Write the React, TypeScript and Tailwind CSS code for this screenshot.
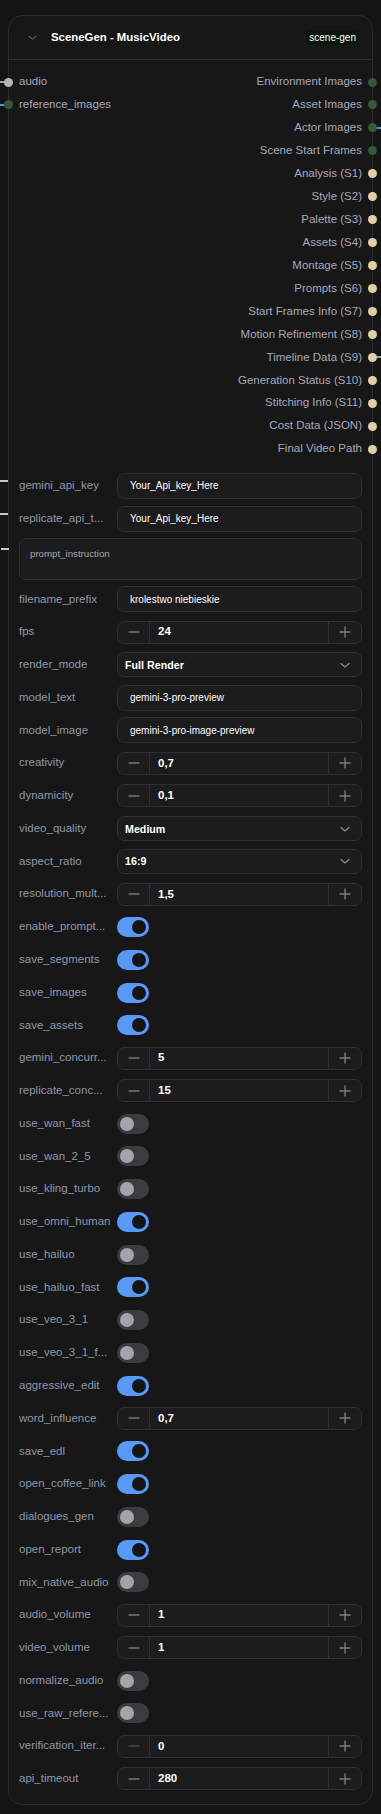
import React from "react";

type Out = { label: string; c: "g" | "b"; link?: string };

const outputs: Out[] = [
  { label: "Environment Images", c: "g" },
  { label: "Asset Images", c: "g" },
  { label: "Actor Images", c: "g", link: "#3f9fe6" },
  { label: "Scene Start Frames", c: "g" },
  { label: "Analysis (S1)", c: "b" },
  { label: "Style (S2)", c: "b" },
  { label: "Palette (S3)", c: "b" },
  { label: "Assets (S4)", c: "b" },
  { label: "Montage (S5)", c: "b" },
  { label: "Prompts (S6)", c: "b" },
  { label: "Start Frames Info (S7)", c: "b" },
  { label: "Motion Refinement (S8)", c: "b" },
  { label: "Timeline Data (S9)", c: "b", link: "#8da88d" },
  { label: "Generation Status (S10)", c: "b" },
  { label: "Stitching Info (S11)", c: "b" },
  { label: "Cost Data (JSON)", c: "b" },
  { label: "Final Video Path", c: "b" },
];

type W =
  | { t: "text"; label: string; value: string; link?: boolean }
  | { t: "area"; label: string; link?: boolean }
  | { t: "num"; label: string; value: string; dim?: boolean }
  | { t: "sel"; label: string; value: string }
  | { t: "tog"; label: string; on: boolean };

const widgets: W[] = [
  { t: "text", label: "gemini_api_key", value: "Your_Api_key_Here", link: true },
  { t: "text", label: "replicate_api_t...", value: "Your_Api_key_Here", link: true },
  { t: "area", label: "prompt_instruction", link: true },
  { t: "text", label: "filename_prefix", value: "krolestwo niebieskie" },
  { t: "num", label: "fps", value: "24" },
  { t: "sel", label: "render_mode", value: "Full Render" },
  { t: "text", label: "model_text", value: "gemini-3-pro-preview" },
  { t: "text", label: "model_image", value: "gemini-3-pro-image-preview" },
  { t: "num", label: "creativity", value: "0,7" },
  { t: "num", label: "dynamicity", value: "0,1" },
  { t: "sel", label: "video_quality", value: "Medium" },
  { t: "sel", label: "aspect_ratio", value: "16:9" },
  { t: "num", label: "resolution_mult...", value: "1,5" },
  { t: "tog", label: "enable_prompt...", on: true },
  { t: "tog", label: "save_segments", on: true },
  { t: "tog", label: "save_images", on: true },
  { t: "tog", label: "save_assets", on: true },
  { t: "num", label: "gemini_concurr...", value: "5" },
  { t: "num", label: "replicate_conc...", value: "15" },
  { t: "tog", label: "use_wan_fast", on: false },
  { t: "tog", label: "use_wan_2_5", on: false },
  { t: "tog", label: "use_kling_turbo", on: false },
  { t: "tog", label: "use_omni_human", on: true },
  { t: "tog", label: "use_hailuo", on: false },
  { t: "tog", label: "use_hailuo_fast", on: true },
  { t: "tog", label: "use_veo_3_1", on: false },
  { t: "tog", label: "use_veo_3_1_f...", on: false },
  { t: "tog", label: "aggressive_edit", on: true },
  { t: "num", label: "word_influence", value: "0,7" },
  { t: "tog", label: "save_edl", on: true },
  { t: "tog", label: "open_coffee_link", on: true },
  { t: "tog", label: "dialogues_gen", on: false },
  { t: "tog", label: "open_report", on: true },
  { t: "tog", label: "mix_native_audio", on: false },
  { t: "num", label: "audio_volume", value: "1" },
  { t: "num", label: "video_volume", value: "1" },
  { t: "tog", label: "normalize_audio", on: false },
  { t: "tog", label: "use_raw_refere...", on: false },
  { t: "num", label: "verification_iter...", value: "0", dim: true },
  { t: "num", label: "api_timeout", value: "280" },
];

function Chevron({ className }: { className?: string }) {
  return (
    <svg viewBox="0 0 12 12" className={className} fill="none">
      <path d="M2 4.5 L6 8 L10 4.5" stroke="currentColor" strokeWidth="1.2" strokeLinecap="round" strokeLinejoin="round" />
    </svg>
  );
}

function Minus({ dim }: { dim?: boolean }) {
  return (
    <svg viewBox="0 0 12 12" className={`h-[12px] w-[12px] ${dim ? "text-[#4a4a4e]" : "text-[#7c7c82]"}`} fill="none">
      <path d="M0.5 6 H11.5" stroke="currentColor" strokeWidth="1.4" />
    </svg>
  );
}

function Plus() {
  return (
    <svg viewBox="0 0 12 12" className="h-[12px] w-[12px] text-[#7c7c82]" fill="none">
      <path d="M0.5 6 H11.5 M6 0.5 V11.5" stroke="currentColor" strokeWidth="1.4" />
    </svg>
  );
}

function Label({ children }: { children: React.ReactNode }) {
  return (
    <div className="w-[91px] shrink-0 overflow-hidden whitespace-nowrap text-[11.5px] leading-none text-[#8e96aa]">
      {children}
    </div>
  );
}

function Widget({ w }: { w: W }) {
  if (w.t === "area") {
    return (
      <div className="relative h-[42px] rounded-[7px] border border-[#2f2f33] bg-[#1c1c1e] pl-[10px] pt-[9px] text-[9.7px] leading-[11px] text-[#a6a6a6]">
        {w.link && <div className="absolute left-[-19px] top-[9px] h-[2px] w-[8px] bg-[#c3cbbb]" />}
        prompt_instruction
      </div>
    );
  }
  let control: React.ReactNode = null;
  if (w.t === "text") {
    control = (
      <div className="flex h-[26px] flex-1 items-center rounded-[7px] border border-[#2f2f33] bg-[#1c1c1e] pl-[12px] text-[10px] text-white">
        {w.value}
      </div>
    );
  } else if (w.t === "num") {
    control = (
      <div className="flex h-[23px] flex-1 items-stretch rounded-[7px] border border-[#2f2f33] bg-[#1c1c1e]">
        <div className="flex w-[32px] items-center justify-center border-r border-[#2f2f33]">
          <Minus dim={w.dim} />
        </div>
        <div className="flex flex-1 items-center pl-[8px] text-[11.5px] font-bold text-white">{w.value}</div>
        <div className="flex w-[33px] items-center justify-center border-l border-[#2f2f33]">
          <Plus />
        </div>
      </div>
    );
  } else if (w.t === "sel") {
    control = (
      <div className="flex h-[25px] flex-1 items-center justify-between rounded-[7px] border border-[#2f2f33] bg-[#1c1c1e] pl-[7px] pr-[10px] text-[10.7px] font-bold text-white">
        <span>{w.value}</span>
        <Chevron className="h-[12px] w-[12px] text-[#8a8a90]" />
      </div>
    );
  } else if (w.t === "tog") {
    control = w.on ? (
      <div className="flex h-[20px] w-[32px] items-center justify-end rounded-full bg-[#5899f6] pr-[3px]">
        <div className="h-[14px] w-[14px] rounded-full bg-[#151515]" />
      </div>
    ) : (
      <div className="flex h-[20px] w-[32px] items-center rounded-full bg-[#3b3b40] pl-[3px]">
        <div className="h-[14px] w-[14px] rounded-full bg-[#a3a3ab]" />
      </div>
    );
  }
  return (
    <div className="relative flex h-[26.77px] items-center">
      {w.t === "text" && w.link && <div className="absolute left-[-19px] top-[8px] h-[2px] w-[8px] bg-[#c3cbbb]" />}
      <Label>{w.label}</Label>
      <div className="ml-[7px] flex flex-1 items-center">{control}</div>
    </div>
  );
}

export default function App() {
  return (
    <div className="min-h-screen bg-[#151515] pb-[8px] pl-[8px] pt-[15px] font-['Liberation_Sans',Arial,sans-serif]">
      <div className="relative w-[365px] rounded-[14px] border border-[#2b2b2d] bg-[#171717]">
        {/* header */}
        <div className="flex h-[44px] items-center border-b border-[#2b2b2d] pl-[18px] pr-[13px]">
          <Chevron className="h-[11px] w-[11px] text-[#5a5d70]" />
          <div className="ml-[13px] flex-1 text-[11.4px] font-bold text-white">SceneGen - MusicVideo</div>
          <div className="flex h-[15px] items-center bg-[#0b160c] px-[3px] text-[10px] text-white">scene-gen</div>
        </div>

        {/* io */}
        <div className="flex justify-between pt-[10.5px]">
          <div className="flex flex-col">
            <div className="relative flex h-[22.94px] items-center pl-[10px] text-[11.5px] text-[#a7a7bc]">
              <div className="absolute left-[-9px] top-[10.5px] h-[2px] w-[6px] bg-[#a3b196]" />
              <div className="absolute left-[-5.5px] top-[7px] h-[9px] w-[9px] rounded-full bg-[#b5b5b5]" />
              audio
            </div>
            <div className="relative flex h-[22.94px] items-center pl-[10px] text-[11.5px] text-[#a7a7bc]">
              <div className="absolute left-[-9px] top-[10.5px] h-[2px] w-[6px] bg-[#3f9fe6]" />
              <div className="absolute left-[-5.5px] top-[7px] h-[9px] w-[9px] rounded-full bg-[#35573a]" />
              reference_images
            </div>
          </div>
          <div className="flex flex-col items-end">
            {outputs.map((o) => (
              <div key={o.label} className="relative flex h-[22.94px] items-center pr-[10px] text-[11.5px] text-[#a7a7bc]">
                {o.link && <div className="absolute right-[-10px] top-[10.5px] h-[2px] w-[7px]" style={{ background: o.link }} />}
                <div
                  className={`absolute right-[-5px] top-[7px] h-[9px] w-[9px] rounded-full ${o.c === "g" ? "bg-[#35573a]" : "bg-[#e1cea6]"}`}
                />
                {o.label}
              </div>
            ))}
          </div>
        </div>

        {/* widgets */}
        <div className="flex flex-col gap-[6px] px-[10px] pb-[12px] pt-[12px]">
          {widgets.map((w) => (
            <Widget key={w.label} w={w} />
          ))}
        </div>
      </div>
    </div>
  );
}
